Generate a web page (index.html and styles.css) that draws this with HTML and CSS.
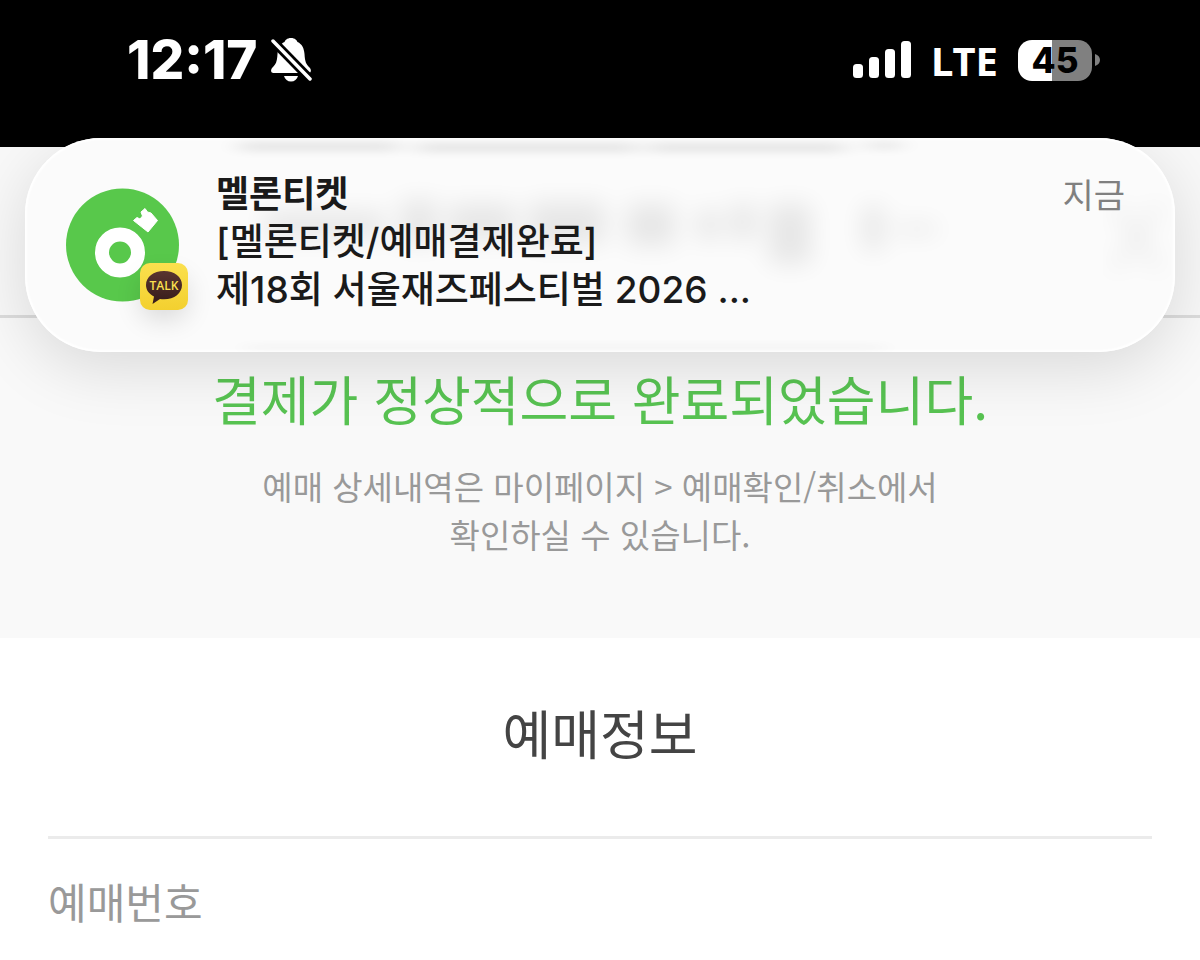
FILE: index.html
```
<!DOCTYPE html>
<html lang="ko">
<head>
  <meta charset="UTF-8">
  <meta name="viewport" content="width=device-width, initial-scale=1">
  <title>예매정보</title>
  <link rel="stylesheet" href="styles.css">
</head>
<body>
  <header class="status-bar">
    <div class="status-left">
      <span class="clock">12:17</span>
      <svg class="bell" width="42" height="46" viewBox="0 0 42 46" aria-hidden="true">
        <path d="M21 1c-4 0-6 2.500-6.500 4C10 7 8 11 7.500 17c-.5 8-1.500 10-5 13.500C.5 32.500.5 36 3.500 36h35c3 0 3-3.500 1-5.500-3.500-3.500-4.500-5.500-5-13.500C34 11 32 7 27.500 5 27 3.500 25 1 21 1z" fill="#fff"/>
        <path d="M14 39h14c-1 3.500-3.500 5.500-7 5.500S15 42.500 14 39z" fill="#fff"/>
        <path d="M1 2l41 42" stroke="#000" stroke-width="9"/>
        <path d="M3 4l37 38" stroke="#fff" stroke-width="3.500" stroke-linecap="round"/>
      </svg>
    </div>
    <div class="status-right">
      <svg class="signal" width="58" height="38" viewBox="0 0 58 38" fill="#fff" aria-hidden="true">
        <rect x="0" y="23" width="10" height="14" rx="3.500"/>
        <rect x="16" y="16" width="10" height="21" rx="3.500"/>
        <rect x="32" y="8" width="10" height="29" rx="3.500"/>
        <rect x="48" y="0" width="10" height="37" rx="3.500"/>
      </svg>
      <span class="network">LTE</span>
      <div class="battery">
        <span class="battery-level">45</span>
        <svg width="5" height="12" viewBox="0 0 5 12" aria-hidden="true">
          <path d="M0 0c3 1 5 3 5 6s-2 5-5 6z" fill="#808080"/>
        </svg>
      </div>
    </div>
  </header>

  <section class="notification">
    <svg class="glass" width="100%" height="100%" aria-hidden="true">
      <defs>
        <filter id="soft" x="-20%" y="-60%" width="140%" height="220%">
          <feGaussianBlur stdDeviation="12"/>
        </filter>
        <filter id="edge" x="-10%" y="-200%" width="120%" height="500%">
          <feGaussianBlur stdDeviation="12 4"/>
        </filter>
      </defs>
      <g filter="url(#edge)" fill="#000" opacity=".09">
        <rect x="214" y="4" width="160" height="9"/>
        <rect x="392" y="5" width="220" height="9"/>
        <rect x="624" y="5" width="196" height="9"/>
        <rect x="842" y="4" width="34" height="7"/>
      </g>
      <g filter="url(#soft)" fill="#000" opacity=".08">
        <rect x="240" y="74" width="120" height="26"/>
        <rect x="376" y="62" width="36" height="44"/>
        <rect x="424" y="66" width="66" height="36"/>
        <rect x="504" y="64" width="76" height="42"/>
        <rect x="602" y="66" width="48" height="42"/>
        <rect x="672" y="72" width="22" height="30"/>
        <rect x="706" y="66" width="24" height="36"/>
        <rect x="744" y="66" width="42" height="60"/>
        <rect x="838" y="68" width="20" height="44"/>
        <rect x="872" y="86" width="40" height="10"/>
      </g>
      <g filter="url(#soft)" stroke="#000" stroke-width="9" opacity=".06">
        <path d="M1088 66l48 66M1136 66l-48 66"/>
      </g>
      <rect x="220" y="208" width="640" height="3" fill="#000" opacity=".07" filter="url(#edge)"/>
    </svg>

    <svg class="app-icon" width="124" height="124" viewBox="0 0 124 124" aria-hidden="true">
      <defs>
        <linearGradient id="talkBg" x1="0" y1="0" x2="0" y2="1">
          <stop offset="0" stop-color="#fbe04e"/>
          <stop offset="1" stop-color="#f3d02f"/>
        </linearGradient>
        <linearGradient id="talkBubble" x1="0" y1="0" x2="0" y2="1">
          <stop offset="0" stop-color="#5a3430"/>
          <stop offset="1" stop-color="#351c1a"/>
        </linearGradient>
        <filter id="talkShadow" x="-100%" y="-100%" width="300%" height="300%">
          <feGaussianBlur stdDeviation="14"/>
        </filter>
      </defs>
      <circle cx="56.500" cy="57" r="56.500" fill="#58c84b"/>
      <circle cx="54" cy="64.500" r="18" fill="none" stroke="#fff" stroke-width="14"/>
      <path d="M67.500 32.500l3.500-3 3 1.500 2.500-3-1.500-4 4-3.500 2.500 3.500 3.500 1 6.500 7.500L82 44z" fill="#fff" stroke="#fff" stroke-width="1" stroke-linejoin="round"/>
      <rect x="76" y="90" width="44" height="40" rx="12" fill="#000" opacity=".15" filter="url(#talkShadow)"/>
      <rect x="74" y="75" width="48" height="47" rx="10" fill="url(#talkBg)"/>
      <path d="M98 83c-10.500 0-18 6-18 14 0 5 3 9 8 11.500L86.500 116l7.500-5c1.300.2 2.600.3 4 .3 10.500 0 18-6.300 18-14.300s-7.500-14-18-14z" fill="url(#talkBubble)"/>
      <text class="talk-text" x="98" y="102" text-anchor="middle">TALK</text>
    </svg>

    <div class="message">
      <strong class="sender">멜론티켓</strong>
      <p>[멜론티켓/예매결제완료]</p>
      <p>제18회 서울재즈페스티벌 2026 ...</p>
    </div>
    <span class="time">지금</span>
  </section>

  <main>
    <div class="page-top"></div>
    <section class="result">
      <h1>결제가 정상적으로 완료되었습니다.</h1>
      <p>예매 상세내역은 마이페이지 &gt; 예매확인/취소에서<br>확인하실 수 있습니다.</p>
    </section>

    <section class="booking">
      <h2>예매정보</h2>
      <dl class="booking-list">
        <dt>예매번호</dt>
      </dl>
    </section>
  </main>
</body>
</html>
```

FILE: styles.css
```
* {
  box-sizing: border-box;
}
body {
  position: relative;
  margin: 0;
  background-color: #fff;
  font-family: "Noto Sans CJK KR", sans-serif;
}
h1, h2, p, dl {
  margin: 0;
}

/* status bar */
.status-bar {
  display: flex;
  justify-content: space-between;
  align-items: flex-start;
  height: 147px;
  padding: 30px 100px 0 127px;
  background-color: #000;
  color: #fff;
  font-family: Inter, sans-serif;
}
.status-left, .status-right {
  display: flex;
  align-items: center;
  height: 60px;
}
.status-left {
  gap: 13px;
}
.status-right {
  gap: 20px;
}
.clock {
  font-size: 53px;
  font-weight: 800;
}
.network {
  font-family: "Noto Sans", sans-serif;
  font-size: 40px;
  font-weight: 700;
}
.battery {
  display: flex;
  align-items: center;
  gap: 3px;
}
.battery-level {
  width: 74px;
  border-radius: 14px;
  background: linear-gradient(to right, #fff 46%, #808080 46%);
  color: #000;
  font-size: 35px;
  font-weight: 800;
  line-height: 41px;
  text-align: center;
}

/* notification */
.notification {
  position: absolute;
  top: 138px;
  left: 25px;
  right: 25px;
  display: flex;
  align-items: flex-start;
  padding: 32px 50px 38px 41px;
  border-radius: 76px;
  background-color: #fbfbfb;
  box-shadow: 0 16px 64px rgba(0, 0, 0, 0.13), inset 0 0 2px 2px #fff;
  overflow: hidden;
}
.glass {
  position: absolute;
  top: 0;
  left: 0;
}
.app-icon {
  position: relative;
  flex: none;
  margin-top: 18px;
  overflow: visible;
}
.talk-text {
  font-family: "Open Sans", sans-serif;
  font-size: 12px;
  font-weight: 600;
  fill: #fbe04e;
}
.message {
  position: relative;
  flex: 1;
  margin-left: 26px;
  color: #1a1a1a;
  font-family: Inter, "Noto Sans CJK KR", sans-serif;
  font-size: 37px;
  font-weight: 500;
  line-height: 48px;
}
.sender {
  display: block;
  font-size: 36px;
  font-weight: 700;
}
.time {
  position: relative;
  color: #808080;
  font-size: 34px;
  line-height: 48px;
}

/* page */
.page-top {
  height: 171px;
  border-bottom: 3px solid #dcdcdc;
  background-color: #f8f8f8;
}
.result {
  padding: 40px 48px 80px;
  background-color: #f9f9f9;
  text-align: center;
}
.result h1 {
  color: #58c352;
  font-size: 53px;
  font-weight: 400;
  line-height: 80px;
}
.result p {
  margin-top: 24px;
  color: #999;
  font-size: 33px;
  font-weight: 400;
  line-height: 48px;
}
.booking {
  padding: 54px 48px 24px;
}
.booking h2 {
  padding-bottom: 64px;
  border-bottom: 3px solid #ebebeb;
  color: #444;
  font-size: 53px;
  font-weight: 400;
  line-height: 80px;
  text-align: center;
}
.booking-list {
  padding-top: 32px;
  color: #999;
  font-size: 42px;
  font-weight: 400;
  line-height: 60px;
}
```
